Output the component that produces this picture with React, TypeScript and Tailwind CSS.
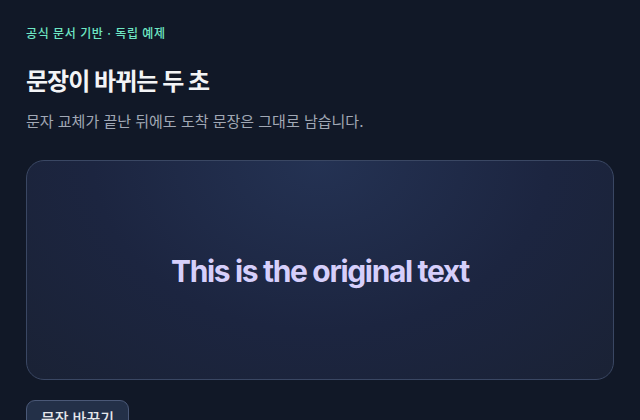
import { useState } from 'react';

const ORIGINAL = 'This is the original text';
const TARGET = 'The sentence has changed';

export default function App() {
  const [swapped, setSwapped] = useState(false);

  return (
    <div className="min-h-screen bg-[#111827] px-[26px] pt-[27px] font-['Inter','Noto_Sans_CJK_KR',sans-serif]">
      {/* Header */}
      <p className="text-[12px] leading-[14px] font-medium tracking-[0.05em] text-[#6ee7c4]">
        공식 문서 기반 · 독립 예제
      </p>
      <h1 className="mt-[25px] text-[24px] leading-[32px] font-bold tracking-[-0.04em] text-[#f3f4f6]">
        문장이 바뀌는 두 초
      </h1>
      <p className="mt-[13px] text-[15px] leading-[22px] text-[#a1a8b5]">
        문자 교체가 끝난 뒤에도 도착 문장은 그대로 남습니다.
      </p>

      {/* Stage */}
      <div className="mt-[27px] flex h-[220px] items-center justify-center rounded-[18px] border border-[#3a4763] bg-[radial-gradient(ellipse_at_50%_0%,#243253_0%,#1c2540_55%,#1a2235_100%)]">
        <span className="mt-[3px] text-[30px] font-bold tracking-[-0.045em] text-[#d6cffb]">
          {swapped ? TARGET : ORIGINAL}
        </span>
      </div>

      <button
        onClick={() => setSwapped((s) => !s)}
        className="mt-[20px] rounded-[9px] border border-[#4a5877] bg-[#233048] px-[14px] py-[7px] text-[15px] font-medium text-[#e5e7eb]"
      >
        문장 바꾸기
      </button>
    </div>
  );
}
